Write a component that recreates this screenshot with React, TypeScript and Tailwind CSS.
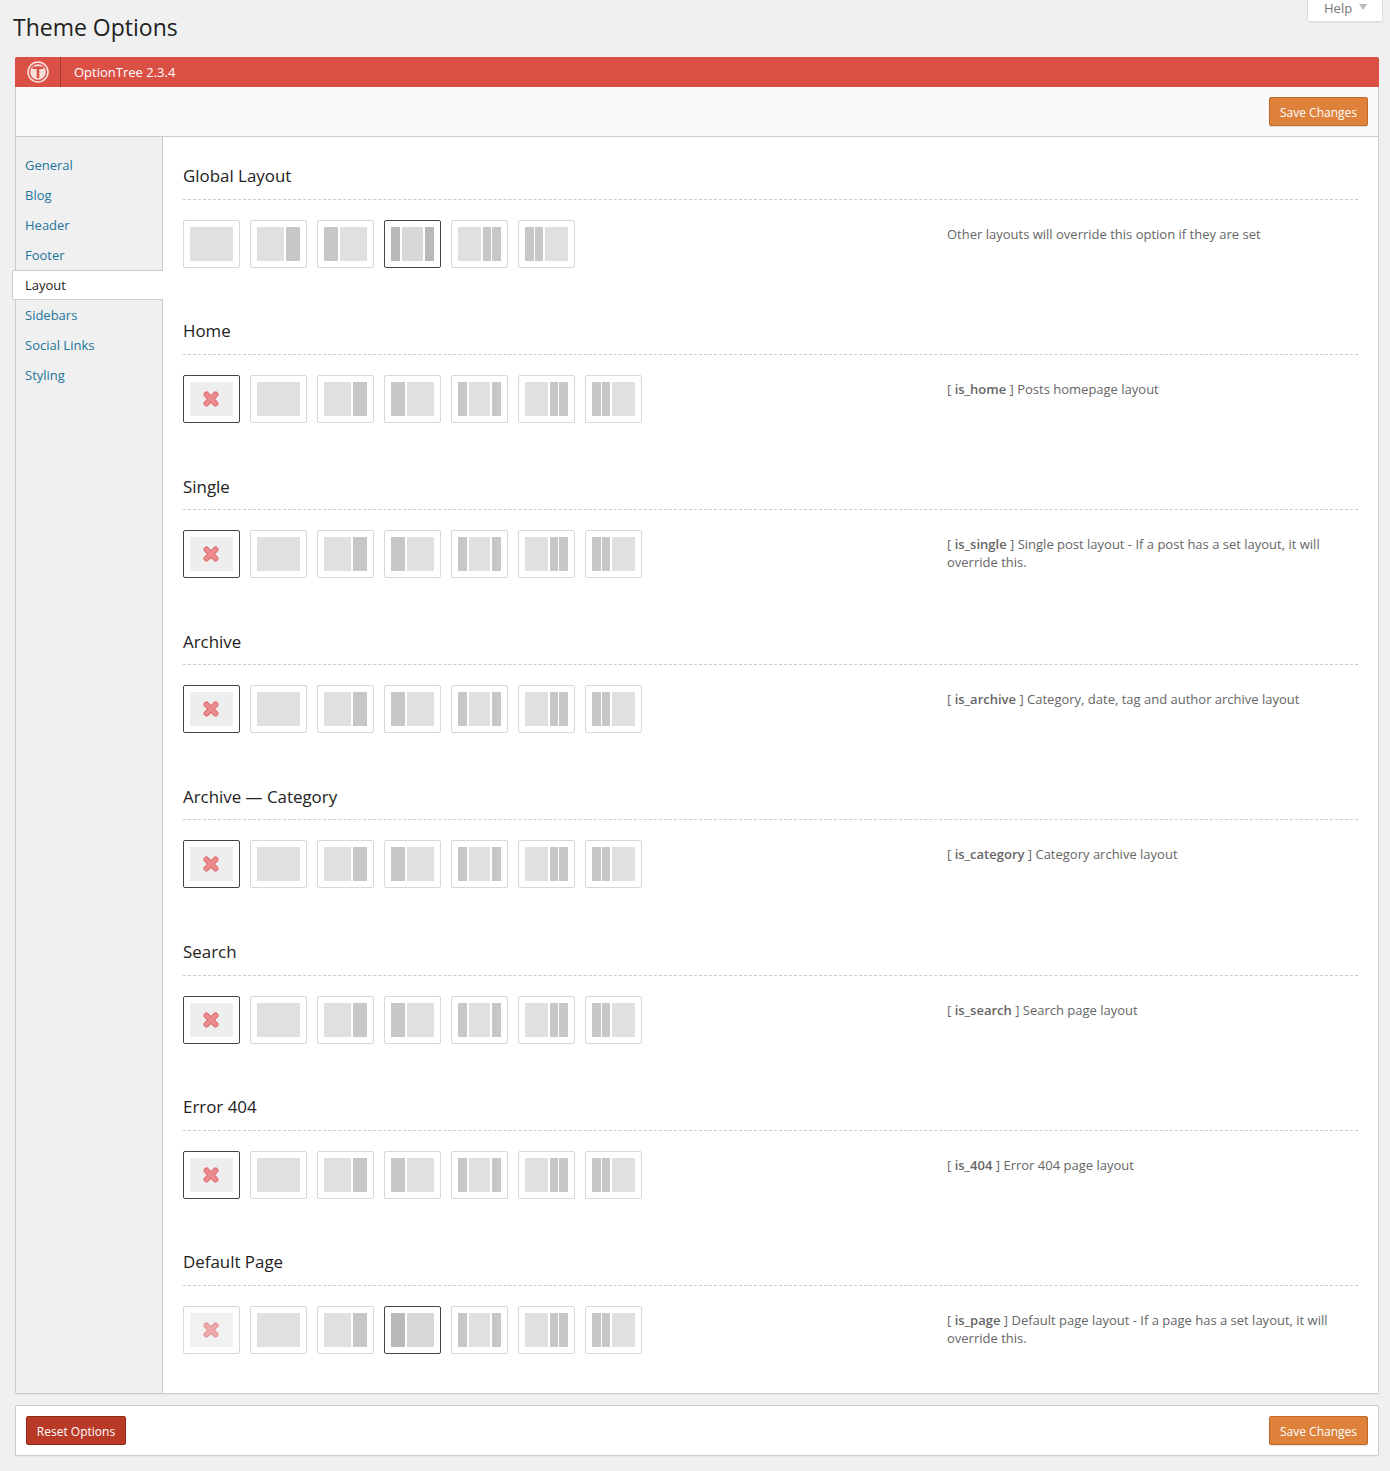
const sideLinks = ['General', 'Blog', 'Header', 'Footer', 'Layout', 'Sidebars', 'Social Links', 'Styling'];

type Kind = 'off' | 'full' | 'right' | 'left' | 'mid' | 'cr' | 'cl';

const allKinds: Kind[] = ['off', 'full', 'right', 'left', 'mid', 'cr', 'cl'];

const Tag = ({ children }: { children: string }) => <strong className="font-semibold">{children}</strong>;

const sections = [
  { title: 'Global Layout', kinds: allKinds.slice(1), selected: 'mid', desc: <>Other layouts will override this option if they are set</> },
  { title: 'Home', kinds: allKinds, selected: 'off', desc: <>[ <Tag>is_home</Tag> ] Posts homepage layout</> },
  { title: 'Single', kinds: allKinds, selected: 'off', desc: <>[ <Tag>is_single</Tag> ] Single post layout - If a post has a set layout, it will override this.</> },
  { title: 'Archive', kinds: allKinds, selected: 'off', desc: <>[ <Tag>is_archive</Tag> ] Category, date, tag and author archive layout</> },
  { title: 'Archive — Category', kinds: allKinds, selected: 'off', desc: <>[ <Tag>is_category</Tag> ] Category archive layout</> },
  { title: 'Search', kinds: allKinds, selected: 'off', desc: <>[ <Tag>is_search</Tag> ] Search page layout</> },
  { title: 'Error 404', kinds: allKinds, selected: 'off', desc: <>[ <Tag>is_404</Tag> ] Error 404 page layout</> },
  { title: 'Default Page', kinds: allKinds, selected: 'left', desc: <>[ <Tag>is_page</Tag> ] Default page layout - If a page has a set layout, it will override this.</> },
];

const OffMark = ({ faded }: { faded: boolean }) => (
  <svg width="16" height="16" viewBox="0 0 16 16" className={faded ? 'opacity-70' : ''}>
    <path d="M3.5 3.5 L12.5 12.5 M12.5 3.5 L3.5 12.5" stroke="#e07274" strokeWidth="6" strokeLinecap="round" />
    <path d="M3.5 3.5 L12.5 12.5 M12.5 3.5 L3.5 12.5" stroke="#ec8c8e" strokeWidth="3.5" strokeLinecap="round" />
  </svg>
);

const Tile = ({ kind, selected }: { kind: Kind; selected: boolean }) => {
  const light = selected ? 'bg-[#d8d8d8]' : 'bg-[#e0e0e0]';
  const dark = selected ? 'bg-[#b9b9b9]' : 'bg-[#c7c7c7]';
  return (
    <div className={`w-[57px] h-[48px] p-[6px] bg-white border rounded-[2px] ${selected ? 'border-[#444444]' : 'border-[#d8d8d8]'}`}>
      {kind === 'off' && (
        <div className={`w-[43px] h-[34px] pr-[1px] flex items-center justify-center ${selected ? 'bg-[#eeeeee]' : 'bg-[#f1f1f1]'}`}>
          <OffMark faded={!selected} />
        </div>
      )}
      {kind === 'full' && <div className={`w-[43px] h-[34px] ${light}`} />}
      {kind === 'right' && (
        <div className="w-[43px] h-[34px] flex gap-[2px]">
          <div className={`w-[27px] ${light}`} />
          <div className={`w-[14px] ${dark}`} />
        </div>
      )}
      {kind === 'left' && (
        <div className="w-[43px] h-[34px] flex gap-[2px]">
          <div className={`w-[14px] ${dark}`} />
          <div className={`w-[27px] ${light}`} />
        </div>
      )}
      {kind === 'mid' && (
        <div className="w-[43px] h-[34px] flex gap-[2px]">
          <div className={`w-[9px] ${dark}`} />
          <div className={`w-[21px] ${light}`} />
          <div className={`w-[9px] ${dark}`} />
        </div>
      )}
      {kind === 'cr' && (
        <div className="w-[43px] h-[34px] flex">
          <div className={`w-[23px] mr-[2px] ${light}`} />
          <div className={`w-[8px] mr-[1px] ${dark}`} />
          <div className={`w-[9px] ${dark}`} />
        </div>
      )}
      {kind === 'cl' && (
        <div className="w-[43px] h-[34px] flex">
          <div className={`w-[9px] mr-[1px] ${dark}`} />
          <div className={`w-[8px] mr-[2px] ${dark}`} />
          <div className={`w-[23px] ${light}`} />
        </div>
      )}
    </div>
  );
};

const SaveButton = () => (
  <button className="w-[99px] h-[29px] pt-[2px] bg-[#dd813b] border border-[#c06a2a] rounded-[2px] text-white text-[12px] leading-[25px] shadow-[0_1px_1px_rgba(0,0,0,0.12)]">
    Save Changes
  </button>
);

export default function App() {
  return (
    <div className="w-[1390px] h-[1471px] bg-[#f0f0f0] font-['Open_Sans',sans-serif] overflow-hidden">
      {/* top of the page */}
      <div className="h-[57px] flex justify-between items-start">
        <h1 className="pl-[13px] pt-[11px] text-[23px] leading-[32px] font-normal text-[#222222]">Theme Options</h1>
        <div className="w-[76px] h-[22px] mr-[7px] bg-white border-x border-b border-[#dddddd] rounded-b-[2px] flex items-center pl-[16px] gap-[7px] shadow-[0_1px_1px_rgba(0,0,0,0.05)]">
          <span className="text-[13px] leading-[16px] text-[#777777] -mt-[5px]">Help</span>
          <span className="w-0 h-0 -mt-[8px] border-x-[4px] border-x-transparent border-t-[6px] border-t-[#bbbbbb]" />
        </div>
      </div>

      {/* main panel */}
      <div className="mx-[15px] w-[1364px]">
        <div className="h-[30px] bg-[#db5044] rounded-t-[2px] flex items-center text-white">
          <div className="w-[46px] h-[30px] border-r border-[#a93a30] flex items-center justify-center">
            <svg width="22" height="22" viewBox="0 0 22 22">
              <circle cx="11" cy="11" r="10" fill="none" stroke="#fbe4e1" strokeWidth="1.5" />
              <circle cx="11" cy="11" r="7.8" fill="#f8dedb" />
              <rect x="5.5" y="5.5" width="11" height="2.5" fill="#db5044" />
              <rect x="9.7" y="5.5" width="2.6" height="11.5" fill="#db5044" />
            </svg>
          </div>
          <span className="ml-[13px] text-[13px] leading-[18px]">OptionTree 2.3.4</span>
        </div>
        <div className="border-x border-b border-[#cccccc] rounded-b-[2px] shadow-[0_1px_1px_rgba(0,0,0,0.05)]">
          <div className="h-[50px] bg-[#fafafa] border-b border-[#cccccc] flex justify-end items-start pt-[10px] pr-[10px]">
            <SaveButton />
          </div>
          <div className="flex h-[1256px]">
            <div className="w-[147px] bg-[#f0f0f0] border-r border-[#cccccc] pt-[13px] shrink-0">
              {sideLinks.map((name) =>
                name === 'Layout' ? (
                  <div key={name} className="h-[30px] -ml-[4px] -mr-px pl-[12px] bg-white border-y border-l border-[#cccccc] rounded-l-[2px] text-[13px] leading-[28px] text-[#222222]">
                    {name}
                  </div>
                ) : (
                  <div key={name} className="h-[30px] pl-[9px] text-[13px] leading-[30px] text-[#21759b]">
                    {name}
                  </div>
                ),
              )}
            </div>
            <div className="flex-1 bg-white pl-[20px] pr-[20px]">
              {sections.map((s) => (
                <div key={s.title} className="h-[155.12px]">
                  <h2 className="h-[63px] pt-[27.35px] border-b border-dashed border-[#cccccc] text-[16.9px] leading-[24px] font-normal text-[#222222]">
                    {s.title}
                  </h2>
                  <div className="flex mt-[20px]">
                    <div className="w-[764px] flex gap-[10px]">
                      {s.kinds.map((k) => (
                        <Tile key={k} kind={k} selected={k === s.selected} />
                      ))}
                    </div>
                    <p className="w-[400px] mt-[5px] text-[13px] leading-[18px] text-[#666666]">{s.desc}</p>
                  </div>
                </div>
              ))}
            </div>
          </div>
        </div>

        {/* bottom bar */}
        <div className="mt-[11px] h-[51px] bg-white border border-[#cccccc] rounded-[2px] shadow-[0_1px_1px_rgba(0,0,0,0.05)] flex justify-between items-start pt-[10px] px-[10px]">
          <button className="w-[100px] h-[29px] pt-[2px] bg-[#b83a26] border border-[#8f2a1a] rounded-[2px] text-white text-[12px] leading-[25px]">
            Reset Options
          </button>
          <SaveButton />
        </div>
      </div>
    </div>
  );
}
